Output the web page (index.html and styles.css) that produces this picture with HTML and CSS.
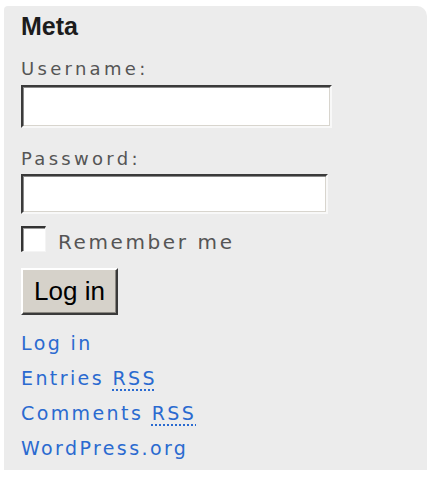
FILE: index.html
```html
<!DOCTYPE html>
<html>
<head>
<meta charset="utf-8">
<title>Meta</title>
<link rel="stylesheet" href="styles.css">
</head>
<body>
<div class="widget">
  <h2 class="widget-title">Meta</h2>
  <form class="login-form">
    <label class="field-label" for="user">Username:</label>
    <input class="text-input user-input" id="user" type="text">
    <label class="field-label pass-label" for="pass">Password:</label>
    <input class="text-input pass-input" id="pass" type="password">
    <div class="remember-row">
      <input class="check" type="checkbox" id="rem">
      <label class="remember-label" for="rem">Remember me</label>
    </div>
    <button class="login-btn" type="button">Log in</button>
  </form>
  <ul class="meta-links">
    <li><a href="#">Log in</a></li>
    <li><a href="#">Entries <abbr class="rss">RSS</abbr></a></li>
    <li><a href="#">Comments <abbr class="rss">RSS</abbr></a></li>
    <li><a href="#">WordPress.org</a></li>
  </ul>
</div>
</body>
</html>
```
FILE: styles.css
```css
html, body {
  margin: 0;
  padding: 0;
  background: #ffffff;
}

.widget {
  box-sizing: border-box;
  width: 423px;
  margin: 6px 0 0 4px;
  padding: 5px 0 4px 17px;
  background: #ececec;
  border-radius: 4px 10px 0 0;
}

.widget-title {
  margin: 0;
  font-family: "Liberation Sans", Arial, sans-serif;
  font-weight: bold;
  font-size: 25px;
  line-height: 30px;
  color: #1c1c1c;
}

.login-form {
  display: flex;
  flex-direction: column;
  align-items: flex-start;
  margin: 0;
}

.field-label {
  display: block;
  margin-top: 17px;
  font-family: "DejaVu Sans", Verdana, sans-serif;
  font-size: 18px;
  line-height: 22px;
  letter-spacing: 3.3px;
  color: #555555;
}

.pass-label {
  margin-top: 20px;
}

.text-input {
  box-sizing: border-box;
  margin: 5px 0 0 0;
  padding: 0;
  background: #ffffff;
  border-style: solid;
  border-width: 2px;
  border-color: #3a3a3a #f8f8f8 #f8f8f8 #3a3a3a;
  box-shadow: inset 1px 1px 0 #8a8a8a, inset -1px -1px 0 #d8d5ce;
  outline: none;
}

.user-input {
  width: 311px;
  height: 43px;
}

.pass-input {
  width: 307px;
  height: 40px;
  margin-top: 4px;
}

.remember-row {
  display: flex;
  align-items: flex-start;
  gap: 12px;
  height: 26px;
  margin-top: 12px;
}

.check {
  appearance: none;
  -webkit-appearance: none;
  box-sizing: border-box;
  width: 25px;
  height: 26px;
  margin: 0;
  background: #ffffff;
  border-style: solid;
  border-width: 2px 1px 1px 2px;
  border-color: #333333 #f4f4f4 #f4f4f4 #333333;
  box-shadow: inset 1px 1px 0 #9a9a9a;
}

.remember-label {
  margin-top: 3px;
  font-family: "DejaVu Sans", Verdana, sans-serif;
  font-size: 20px;
  line-height: 26px;
  letter-spacing: 2.6px;
  color: #555555;
}

.login-btn {
  box-sizing: border-box;
  width: 97px;
  height: 47px;
  margin-top: 16px;
  padding: 0;
  background: #d6d2ca;
  border-style: solid;
  border-width: 2px;
  border-color: #ffffff #3a3a3a #3a3a3a #ffffff;
  box-shadow: inset -1px -1px 0 #8a8780;
  font-family: "Liberation Sans", Arial, sans-serif;
  font-size: 26px;
  color: #000000;
}

.meta-links {
  list-style: none;
  margin: 11px 0 0 0;
  padding: 0;
}

.meta-links li {
  font-family: "DejaVu Sans", Verdana, sans-serif;
  font-size: 19px;
  line-height: 35px;
  letter-spacing: 2.4px;
}

.meta-links a {
  color: #2a6ad0;
  text-decoration: none;
}

.rss {
  text-decoration: underline dotted;
  text-decoration-thickness: 2px;
  text-underline-offset: 4px;
}
```
